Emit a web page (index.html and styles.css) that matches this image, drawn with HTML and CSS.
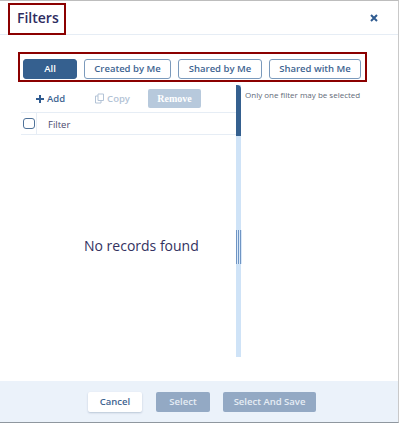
FILE: index.html
```html
<!DOCTYPE html>
<html>
	<head>
		<title>Filters</title>
		<link rel="stylesheet" href="styles.css">
	</head>
	<body>
		<div class="dialog">
			<div class="head">
				<h4 class="title">Filters</h4>
				<svg class="close" width="8" height="8" viewBox="0 0 8 8"><path d="M1 1L7 7M7 1L1 7"/></svg>
			</div>
			<div class="tabs">
				<button class="tab on tab_all" type="button">All</button>
				<button class="tab tab_cr" type="button">Created by Me</button>
				<button class="tab tab_sb" type="button">Shared by Me</button>
				<button class="tab tab_sw" type="button">Shared with Me</button>
			</div>
			<div class="main">
				<div class="left">
					<div class="tools">
						<span class="add"><svg width="8" height="8" viewBox="0 0 8 8"><path d="M4 0V8M0 4H8"/></svg>Add</span>
						<span class="copy"><svg width="11" height="11" viewBox="0 0 11 11"><path d="M4 1H9.500V7.500H4ZM4 3H1.500V10H7V7.500"/></svg>Copy</span>
						<button class="remove" type="button">Remove</button>
					</div>
					<div class="thead">
						<div class="chk_cell"><span class="chk"></span></div>
						<div class="col">Filter</div>
					</div>
					<div class="empty">No records found</div>
				</div>
				<div class="split">
					<div class="split_top"></div>
					<div class="grip"></div>
				</div>
				<div class="right">Only one filter may be selected</div>
			</div>
			<div class="foot">
				<button class="btn cancel" type="button">Cancel</button>
				<button class="btn off sel" type="button">Select</button>
				<button class="btn off sel_save" type="button">Select And Save</button>
			</div>
		</div>
		<div class="mark mark_title"></div>
		<div class="mark mark_tabs"></div>
	</body>
</html>
```

FILE: styles.css
```css
html, body{
	margin: 0;
	height: 423px;
	overflow: hidden;
	background-color: #fff;
}
*{
	box-sizing: border-box;
	font-family: "Open Sans", sans-serif;
}
button{
	padding: 0;
	cursor: pointer;
}
.dialog{
	width: 399px;
	height: 423px;
	display: flex;
	flex-direction: column;
	border-top: 1px solid #bdbdbd;
	border-right: 1px solid #c9c9c9;
	border-bottom: 1px solid #8f979f;
	background-color: #fff;
}
.head{
	height: 34px;
	flex: none;
	display: flex;
	align-items: center;
	justify-content: space-between;
	padding: 0 20px 0 17px;
	border-bottom: 1px solid #e6edf5;
}
.title{
	margin: 0;
	font-size: 14px;
	font-weight: 600;
	color: #2e2c5f;
}
.close{
	fill: none;
	stroke: #2f5b90;
	stroke-width: 2;
}
.tabs{
	height: 50px;
	flex: none;
	display: flex;
	align-items: center;
	gap: 7px;
	padding: 17px 0 0 23px;
}
.tab{
	height: 20px;
	border: 1px solid #7b9abc;
	border-radius: 3px;
	background-color: #fff;
	color: #3e6491;
	font-size: 9.500px;
	font-weight: 600;
}
.on{
	border-color: #35608f;
	background-color: #35608f;
	color: #fff;
}
.tab_all{ width: 54px; }
.tab_cr{ width: 87px; }
.tab_sb{ width: 84px; }
.tab_sw{ width: 92px; }
.main{
	flex: 1;
	display: flex;
	padding-left: 21px;
}
.left{
	width: 215px;
	display: flex;
	flex-direction: column;
}
.tools{
	height: 28px;
	flex: none;
	display: flex;
	align-items: center;
	font-size: 9.500px;
	font-weight: 600;
	border-bottom: 1px solid #e6edf5;
}
.add{
	margin-left: 15px;
	color: #3e6491;
	display: flex;
	align-items: center;
	gap: 3px;
}
.add svg{
	stroke: #2f5b90;
	stroke-width: 2;
}
.copy{
	margin-left: 29px;
	color: #b3c3d6;
	display: flex;
	align-items: center;
	gap: 2px;
}
.copy svg{
	fill: none;
	stroke: #b3c3d6;
}
.remove{
	width: 53px;
	height: 19px;
	margin-left: 18px;
	border: 0;
	border-radius: 2px;
	background-color: #b7c9dc;
	color: #fff;
	font-family: "Liberation Serif", serif;
	font-size: 10px;
	font-weight: bold;
}
.thead{
	height: 22px;
	flex: none;
	display: flex;
	border-bottom: 1px solid #e6edf5;
}
.chk_cell{
	width: 16px;
	display: flex;
	align-items: center;
	padding-left: 2px;
	border-right: 1px solid #e6edf5;
}
.chk{
	width: 12px;
	height: 11px;
	border: 1px solid #4f7299;
	border-radius: 3px;
}
.col{
	padding-left: 11px;
	line-height: 23px;
	font-size: 9.500px;
	color: #4b4a6e;
}
.empty{
	margin-top: 103px;
	padding-left: 63px;
	font-size: 14px;
	line-height: 16px;
	color: #33325f;
}
.split{
	width: 5px;
	height: 272px;
	flex: none;
	position: relative;
	background-color: #cfe3f7;
}
.split_top{
	height: 51px;
	background-color: #35608f;
	border-top-right-radius: 4px;
}
.grip{
	position: absolute;
	left: 0;
	top: 145px;
	width: 6px;
	height: 34px;
	background: repeating-linear-gradient(90deg, #6f95c4 0, #6f95c4 1px, #dbe9f8 1px, #dbe9f8 2px);
}
.right{
	padding: 4px 0 0 4px;
	font-size: 8px;
	line-height: 11px;
	color: #5f6a78;
}
.foot{
	height: 41px;
	flex: none;
	display: flex;
	align-items: center;
	padding-left: 88px;
	gap: 14px;
	background-color: #ebf2fa;
}
.btn{
	height: 20px;
	border: 0;
	border-radius: 2px;
	font-size: 9.500px;
	font-weight: 600;
}
.cancel{
	width: 54px;
	background-color: #fff;
	color: #3e6491;
	box-shadow: 0 1px 2px #b9c6d6;
}
.off{
	background-color: #93a9c4;
	color: #e6edf5;
}
.sel{ width: 54px; }
.sel_save{
	width: 93px;
	margin-left: -1px;
}
.mark{
	position: absolute;
	border: 2px solid #8b0000;
	pointer-events: none;
}
.mark_title{
	left: 8px;
	top: 3px;
	width: 58px;
	height: 32px;
}
.mark_tabs{
	left: 18px;
	top: 52px;
	width: 349px;
	height: 30px;
}
```
